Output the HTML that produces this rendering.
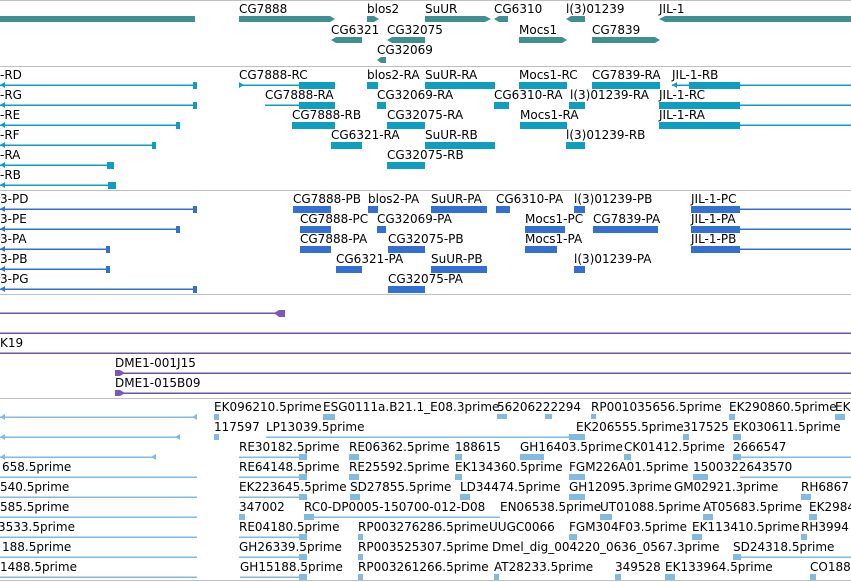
<!DOCTYPE html>
<html><head><meta charset="utf-8">
<style>
html,body{margin:0;padding:0;background:#fff;}
svg{display:block;}
text{font-family:"DejaVu Sans","Liberation Sans",sans-serif;font-size:12px;fill:#000;}
</style></head>
<body>
<svg width="851" height="582" viewBox="0 0 851 582" xmlns="http://www.w3.org/2000/svg">
<!-- separators -->
<g fill="#c0c0c0">
<rect x="0" y="0" width="851" height="1"/>
<rect x="0" y="66" width="851" height="1"/>
<rect x="0" y="190" width="851" height="1"/>
<rect x="0" y="294" width="851" height="1"/>
<rect x="0" y="398" width="851" height="1"/>
<rect x="0" y="580" width="851" height="1"/>
</g>

<!-- GENE TRACK -->
<g fill="#3f8f93">
<rect x="0" y="16" width="195" height="6"/>
<polygon points="239,16 330,16 335,19 330,22 239,22"/>
<polygon points="367,16 374,16 379,19 374,22 367,22"/>
<polygon points="425,16 485,16 491,19 485,22 425,22"/>
<polygon points="494,19 499,16 508,16 508,22 499,22"/>
<polygon points="566,19 571,16 585,16 585,22 571,22"/>
<polygon points="659,19 665,16 851,16 851,22 665,22"/>
<polygon points="331,40 336,37 362,37 362,43 336,43"/>
<polygon points="387,40 392,37 425,37 425,43 392,43"/>
<polygon points="519,37 562,37 567,40 562,43 519,43"/>
<polygon points="592,37 655,37 660,40 655,43 592,43"/>
<polygon points="377,60 381,57 386,57 386,63 381,63"/>
</g>
<text x="239" y="13">CG7888</text>
<text x="367" y="13">blos2</text>
<text x="425" y="13">SuUR</text>
<text x="494" y="13">CG6310</text>
<text x="566" y="13">l(3)01239</text>
<text x="659" y="13">JIL-1</text>
<text x="331" y="34">CG6321</text>
<text x="387" y="34">CG32075</text>
<text x="519" y="34">Mocs1</text>
<text x="592" y="34">CG7839</text>
<text x="377" y="54">CG32069</text>

<!-- TRANSCRIPTS -->
<g fill="#0f9dc0">
<rect x="0" y="84.5" width="197" height="1.5"/><polygon points="0,85 5,82 5,88"/><rect x="193" y="82" width="4" height="7"/>
<rect x="239" y="84.5" width="60" height="1.5"/><polygon points="239,82 244,85 239,88"/><rect x="299" y="82" width="36" height="7"/>
<rect x="367" y="82" width="11" height="7"/>
<rect x="425" y="82" width="70" height="7"/>
<rect x="519" y="82" width="48" height="7"/>
<rect x="592" y="82" width="68" height="7"/>
<rect x="672" y="84.5" width="179" height="1.5"/><rect x="689" y="82" width="51" height="7"/><polygon points="672,85 677,82 677,88"/>

<rect x="0" y="104.5" width="197" height="1.5"/><polygon points="0,105 5,102 5,108"/><rect x="193" y="102" width="4" height="7"/>
<rect x="265" y="104.5" width="35" height="1.5"/><rect x="299" y="102" width="36" height="7"/>
<rect x="377" y="102" width="9" height="7"/>
<rect x="494" y="102" width="15" height="7"/>
<rect x="569" y="102" width="16" height="7"/>
<rect x="659" y="102" width="81" height="7"/><rect x="740" y="104.5" width="111" height="1.5"/>

<rect x="0" y="124.5" width="180" height="1.5"/><polygon points="0,125 5,122 5,128"/><rect x="176" y="122" width="4" height="7"/>
<rect x="292" y="122" width="43" height="7"/>
<rect x="387" y="122" width="38" height="7"/>
<rect x="520" y="122" width="47" height="7"/>
<rect x="659" y="122" width="81" height="7"/><rect x="740" y="124.5" width="111" height="1.5"/>

<rect x="0" y="144.5" width="156" height="1.5"/><polygon points="0,145 5,142 5,148"/><rect x="152" y="142" width="4" height="7"/>
<rect x="331" y="142" width="31" height="7"/>
<rect x="425" y="142" width="70" height="7"/>
<rect x="566" y="142" width="19" height="7"/>

<rect x="0" y="164.5" width="114" height="1.5"/><polygon points="0,165 5,162 5,168"/><rect x="107" y="162" width="7" height="7"/>
<rect x="387" y="162" width="38" height="7"/>

<rect x="0" y="184.5" width="116" height="1.5"/><polygon points="0,185 5,182 5,188"/><rect x="108" y="182" width="8" height="7"/>
</g>
<text x="0" y="79">-RD</text><text x="239" y="79">CG7888-RC</text><text x="367" y="79">blos2-RA</text><text x="425" y="79">SuUR-RA</text><text x="519" y="79">Mocs1-RC</text><text x="592" y="79">CG7839-RA</text><text x="672" y="79">JIL-1-RB</text>
<text x="0" y="99">-RG</text><text x="265" y="99">CG7888-RA</text><text x="377" y="99">CG32069-RA</text><text x="494" y="99">CG6310-RA</text><text x="570" y="99">l(3)01239-RA</text><text x="659" y="99">JIL-1-RC</text>
<text x="0" y="119">-RE</text><text x="292" y="119">CG7888-RB</text><text x="387" y="119">CG32075-RA</text><text x="520" y="119">Mocs1-RA</text><text x="659" y="119">JIL-1-RA</text>
<text x="0" y="139">-RF</text><text x="331" y="139">CG6321-RA</text><text x="425" y="139">SuUR-RB</text><text x="566" y="139">l(3)01239-RB</text>
<text x="0" y="159">-RA</text><text x="387" y="159">CG32075-RB</text>
<text x="0" y="179">-RB</text>

<!-- PROTEINS -->
<g fill="#3370d0">
<rect x="0" y="208.5" width="197" height="1.5"/><polygon points="0,209 5,206 5,212"/><rect x="193" y="206" width="4" height="7"/>
<rect x="293" y="206" width="38" height="7"/><rect x="368" y="206" width="10" height="7"/><rect x="431" y="206" width="56" height="7"/><rect x="496" y="206" width="14" height="7"/><rect x="574" y="206" width="11" height="7"/>
<rect x="691" y="206" width="49" height="7"/><rect x="740" y="208.5" width="111" height="1.5"/>

<rect x="0" y="228.5" width="180" height="1.5"/><polygon points="0,229 5,226 5,232"/><rect x="176" y="226" width="4" height="7"/>
<rect x="300" y="226" width="31" height="7"/><rect x="377" y="226" width="9" height="7"/><rect x="525" y="226" width="40" height="7"/><rect x="593" y="226" width="65" height="7"/>
<rect x="691" y="226" width="49" height="7"/><rect x="740" y="228.5" width="111" height="1.5"/>

<rect x="0" y="248.5" width="110" height="1.5"/><polygon points="0,249 5,246 5,252"/><rect x="106" y="246" width="4" height="7"/>
<rect x="300" y="246" width="31" height="7"/><rect x="388" y="246" width="37" height="7"/><rect x="525" y="246" width="32" height="7"/>
<rect x="691" y="246" width="49" height="7"/><rect x="740" y="248.5" width="111" height="1.5"/>

<rect x="0" y="268.5" width="110" height="1.5"/><polygon points="0,269 5,266 5,272"/><rect x="106" y="266" width="4" height="7"/>
<rect x="336" y="266" width="26" height="7"/><rect x="431" y="266" width="56" height="7"/><rect x="574" y="266" width="11" height="7"/>

<rect x="0" y="288.5" width="197" height="1.5"/><polygon points="0,289 5,286 5,292"/><rect x="193" y="286" width="4" height="7"/>
<rect x="388" y="286" width="37" height="7"/>
</g>
<text x="0" y="203">3-PD</text><text x="293" y="203">CG7888-PB</text><text x="368" y="203">blos2-PA</text><text x="431" y="203">SuUR-PA</text><text x="496" y="203">CG6310-PA</text><text x="574" y="203">l(3)01239-PB</text><text x="691" y="203">JIL-1-PC</text>
<text x="0" y="223">3-PE</text><text x="300" y="223">CG7888-PC</text><text x="377" y="223">CG32069-PA</text><text x="525" y="223">Mocs1-PC</text><text x="593" y="223">CG7839-PA</text><text x="691" y="223">JIL-1-PA</text>
<text x="0" y="243">3-PA</text><text x="300" y="243">CG7888-PA</text><text x="388" y="243">CG32075-PB</text><text x="525" y="243">Mocs1-PA</text><text x="691" y="243">JIL-1-PB</text>
<text x="0" y="263">3-PB</text><text x="336" y="263">CG6321-PA</text><text x="431" y="263">SuUR-PB</text><text x="574" y="263">l(3)01239-PA</text>
<text x="0" y="283">3-PG</text><text x="388" y="283">CG32075-PA</text>

<!-- PURPLE -->
<g fill="#6a55a5">
<rect x="0" y="312.5" width="280" height="1.5"/><polygon points="274,313 279,310 285,310 285,317 279,317" fill="#7a58b8"/>
<rect x="0" y="332.5" width="851" height="1.5"/>
<rect x="0" y="352.5" width="851" height="1.5"/>
<rect x="115" y="372.5" width="736" height="1.5"/><polygon points="115,370 120,370 125,373 120,376 115,376" fill="#7a58b8"/>
<rect x="115" y="392.5" width="736" height="1.5"/><polygon points="115,390 120,390 125,393 120,396 115,396" fill="#7a58b8"/>
</g>
<text x="0" y="347">K19</text>
<text x="115" y="367">DME1-001J15</text>
<text x="115" y="387">DME1-015B09</text>

<!-- EST -->
<g fill="#82bae2">
<rect x="0" y="416.5" width="197" height="1.5"/><polygon points="0,417 5,414 5,420"/><polygon points="197,414 192,417 197,420"/>
<rect x="0" y="436.5" width="180" height="1.5"/><polygon points="0,437 5,434 5,440"/><polygon points="180,434 175,437 180,440"/>
<rect x="0" y="456.5" width="156" height="1.5"/><polygon points="0,457 5,454 5,460"/><polygon points="156,454 151,457 156,460"/>
<rect x="0" y="476.5" width="197" height="1.5"/><rect x="0" y="496.5" width="197" height="1.5"/><rect x="0" y="516.5" width="197" height="1.5"/><rect x="0" y="536.5" width="197" height="1.5"/><rect x="0" y="556.5" width="197" height="1.5"/><rect x="0" y="576.5" width="197" height="1.5"/>
<rect x="214" y="414" width="5" height="6"/><rect x="323" y="414" width="12" height="6"/><rect x="497" y="414" width="10" height="5"/><rect x="545" y="414" width="7" height="5"/><rect x="591" y="414" width="5" height="5"/><rect x="729" y="414" width="6" height="6"/><rect x="835" y="414" width="10" height="6"/>
<rect x="214" y="434" width="5" height="6"/><rect x="266" y="436.5" width="319" height="1.5"/><rect x="569" y="434" width="16" height="6"/><rect x="683" y="434" width="6" height="6"/><rect x="733" y="434" width="8" height="6"/>
<rect x="239" y="456.5" width="60" height="1.5"/><rect x="299" y="454" width="8" height="6"/><rect x="349" y="454" width="10" height="6"/><rect x="455" y="454" width="7" height="6"/><rect x="520" y="454" width="24" height="6"/><rect x="624" y="454" width="7" height="6"/><rect x="733" y="456.5" width="118" height="1.5"/><rect x="733" y="454" width="8" height="6"/>
<rect x="239" y="476.5" width="60" height="1.5"/><rect x="299" y="474" width="8" height="6"/><rect x="349" y="474" width="10" height="6"/><rect x="455" y="474" width="7" height="6"/><rect x="569" y="474" width="16" height="6"/><rect x="693" y="474" width="15" height="6"/><rect x="740" y="476.5" width="111" height="1.5"/>
<rect x="239" y="496.5" width="60" height="1.5"/><rect x="299" y="494" width="8" height="6"/><rect x="350" y="494" width="10" height="6"/><rect x="460" y="494" width="10" height="6"/><rect x="569" y="494" width="16" height="6"/><rect x="801" y="494" width="10" height="6"/>
<rect x="239" y="514" width="6" height="6"/><rect x="304" y="516.5" width="196" height="1.5"/><rect x="304" y="514" width="10" height="6"/><rect x="600" y="514" width="12" height="6"/><rect x="703" y="514" width="10" height="6"/><rect x="809" y="514" width="8" height="6"/>
<rect x="239" y="536.5" width="60" height="1.5"/><rect x="299" y="534" width="8" height="6"/><rect x="358" y="534" width="5" height="6"/><rect x="569" y="534" width="8" height="6"/><rect x="692" y="534" width="10" height="6"/><rect x="801" y="534" width="6" height="6"/>
<rect x="239" y="556.5" width="60" height="1.5"/><rect x="299" y="554" width="8" height="6"/><rect x="358" y="554" width="5" height="6"/><rect x="733" y="556.5" width="118" height="1.5"/><rect x="733" y="554" width="8" height="6"/>
<rect x="240" y="576.5" width="59" height="1.5"/><rect x="299" y="574" width="8" height="6"/><rect x="358" y="574" width="5" height="6"/><rect x="494" y="574" width="5" height="6"/><rect x="615" y="574" width="6" height="6"/><rect x="665" y="574" width="10" height="6"/><rect x="810" y="574" width="6" height="6"/>
</g>
<text x="214" y="411">EK096210.5prime</text><text x="323" y="411">ESG0111a.B21.1_E08.3prime</text><text x="497" y="411">56206222294</text><text x="591" y="411">RP001035656.5prime</text><text x="729" y="411">EK290860.5prime</text><text x="835" y="411">EK</text>
<text x="214" y="431">117597</text><text x="266" y="431">LP13039.5prime</text><text x="576" y="431">EK206555.5prime</text><text x="683" y="431">317525</text><text x="733" y="431">EK030611.5prime</text>
<text x="239" y="451">RE30182.5prime</text><text x="349" y="451">RE06362.5prime</text><text x="455" y="451">188615</text><text x="520" y="451">GH16403.5prime</text><text x="624" y="451">CK01412.5prime</text><text x="733" y="451">2666547</text>
<text x="2" y="471">658.5prime</text><text x="239" y="471">RE64148.5prime</text><text x="349" y="471">RE25592.5prime</text><text x="455" y="471">EK134360.5prime</text><text x="569" y="471">FGM226A01.5prime</text><text x="693" y="471">1500322643570</text>
<text x="0" y="491">540.5prime</text><text x="239" y="491">EK223645.5prime</text><text x="350" y="491">SD27855.5prime</text><text x="460" y="491">LD34474.5prime</text><text x="569" y="491">GH12095.3prime</text><text x="674" y="491">GM02921.3prime</text><text x="801" y="491">RH6867</text>
<text x="0" y="511">585.5prime</text><text x="239" y="511">347002</text><text x="304" y="511">RC0-DP0005-150700-012-D08</text><text x="500" y="511">EN06538.5prime</text><text x="600" y="511">UT01088.5prime</text><text x="703" y="511">AT05683.5prime</text><text x="809" y="511">EK2984</text>
<text x="-2" y="531">3533.5prime</text><text x="239" y="531">RE04180.5prime</text><text x="358" y="531">RP003276286.5prime</text><text x="489" y="531">UUGC0066</text><text x="569" y="531">FGM304F03.5prime</text><text x="692" y="531">EK113410.5prime</text><text x="801" y="531">RH3994</text>
<text x="2" y="551">188.5prime</text><text x="239" y="551">GH26339.5prime</text><text x="358" y="551">RP003525307.5prime</text><text x="492" y="551">Dmel_dig_004220_0636_0567.3prime</text><text x="733" y="551">SD24318.5prime</text>
<text x="0" y="571">1488.5prime</text><text x="240" y="571">GH15188.5prime</text><text x="358" y="571">RP003261266.5prime</text><text x="494" y="571">AT28233.5prime</text><text x="615" y="571">349528</text><text x="665" y="571">EK133964.5prime</text><text x="810" y="571">CO188</text>
</svg>
</body></html>
